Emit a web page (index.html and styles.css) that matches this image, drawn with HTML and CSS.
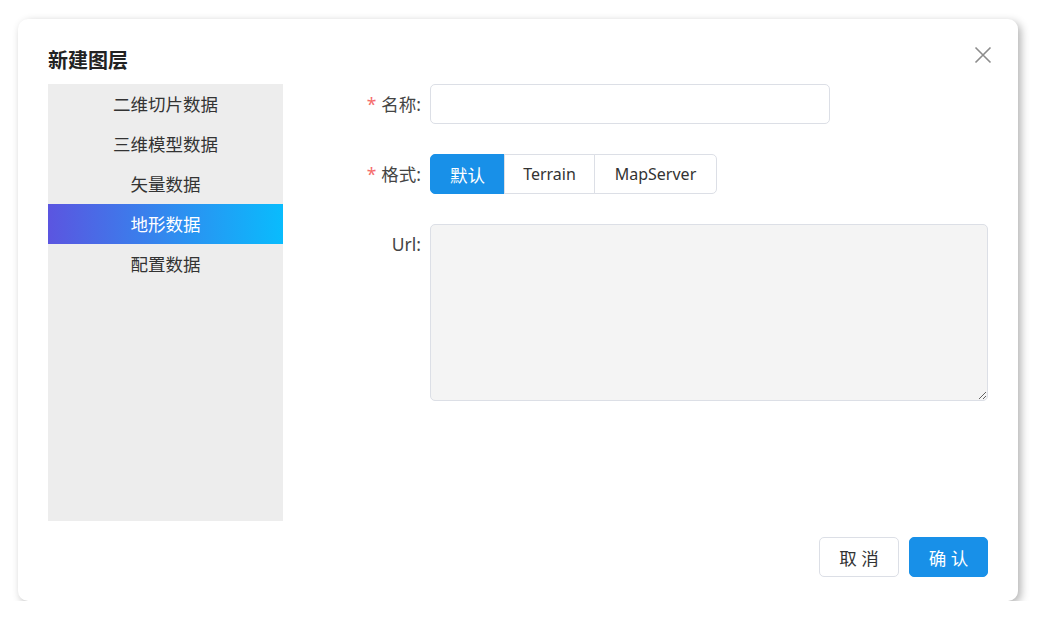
FILE: index.html
```html
<!DOCTYPE html>
<html lang="zh-CN">
  <head>
    <meta charset="utf-8">
    <title>新建图层</title>
    <link rel="stylesheet" href="styles.css">
  </head>
  <body>
    <div class="dialog">
      <header class="dialog-header">
        <h1>新建图层</h1>
        <button class="close" type="button" aria-label="关闭">
          <svg width="18" height="18" viewBox="0 0 18 18"><path d="M1.5 1.5 L16.5 16.5 M16.5 1.5 L1.5 16.5" stroke="#8c8c8c" stroke-width="1.6" fill="none"/></svg>
        </button>
      </header>
      <div class="dialog-body">
        <ul class="side-menu">
          <li>二维切片数据</li>
          <li>三维模型数据</li>
          <li>矢量数据</li>
          <li class="active">地形数据</li>
          <li>配置数据</li>
        </ul>
        <form class="form">
          <div class="form-row">
            <label class="required">名称:</label>
            <input class="text-input name-input" type="text">
          </div>
          <div class="form-row">
            <label class="required">格式:</label>
            <div class="segmented">
              <button type="button" class="seg active">默认</button>
              <button type="button" class="seg">Terrain</button>
              <button type="button" class="seg">MapServer</button>
            </div>
          </div>
          <div class="form-row">
            <label>Url:</label>
            <textarea class="url-input"></textarea>
          </div>
        </form>
      </div>
      <footer class="dialog-footer">
        <button type="button" class="btn">取 消</button>
        <button type="button" class="btn btn-primary">确 认</button>
      </footer>
    </div>
  </body>
</html>
```

FILE: styles.css
```css
* {
  box-sizing: border-box;
}

body {
  margin: 0;
  background: #fff;
  font-family: "Noto Sans", "Noto Sans CJK SC", sans-serif;
  color: #333;
}

.dialog {
  width: 1000px;
  height: 582px;
  margin: 19px 0 0 18px;
  background: #fff;
  border-radius: 10px;
  box-shadow: 3px 3px 8px rgba(0, 0, 0, .3);
  padding: 0 30px;
  display: flex;
  flex-direction: column;
}

.dialog-header {
  display: flex;
  justify-content: space-between;
  align-items: flex-start;
  padding-top: 29px;
  height: 65px;
}

.dialog-header h1 {
  margin: 0;
  font-size: 20px;
  line-height: 26px;
  font-weight: bold;
  color: #222;
}

.close {
  border: 0;
  background: none;
  padding: 0;
  margin: -5px -7px 0 0;
  cursor: pointer;
  width: 24px;
  height: 24px;
  display: flex;
  align-items: center;
  justify-content: center;
}

.dialog-body {
  display: flex;
}

.side-menu {
  list-style: none;
  margin: 0;
  padding: 0;
  width: 235px;
  height: 437px;
  background: #ededed;
  flex-shrink: 0;
}

.side-menu li {
  height: 40px;
  line-height: 40px;
  text-align: center;
  font-size: 17.5px;
  color: #333;
}

.side-menu li.active {
  color: #fff;
  background: linear-gradient(90deg, #5b55e0, #09bcfd);
}

.form {
  flex: 1;
  margin-left: 27px;
  display: flex;
  flex-direction: column;
  gap: 30px;
}

.form-row {
  display: flex;
  align-items: flex-start;
}

.form-row label {
  width: 120px;
  padding-right: 9px;
  text-align: right;
  font-size: 17.5px;
  line-height: 40px;
  color: #444;
  flex-shrink: 0;
}

.form-row label.required:before {
  content: "*";
  color: #f56c6c;
  margin-right: 5px;
}

.text-input {
  height: 40px;
  border: 1px solid #dcdfe6;
  border-radius: 5px;
  outline: none;
  padding: 0 12px;
  font-size: 15px;
}

.name-input {
  width: 400px;
}

.segmented {
  display: flex;
}

.seg {
  height: 40px;
  border: 1px solid #dcdfe6;
  background: #fff;
  font-family: inherit;
  font-size: 16px;
  color: #333;
  padding: 0 18px;
  margin-left: -1px;
}

.seg:first-child {
  margin-left: 0;
  border-radius: 5px 0 0 5px;
}

.seg:last-child {
  border-radius: 0 5px 5px 0;
}

.seg.active {
  background: #1890e8;
  border-color: #1890e8;
  color: #fff;
  font-size: 17.5px;
  padding: 0;
  width: 75px;
}

.seg:nth-child(2) {
  width: 91px;
}

.seg:nth-child(3) {
  width: 123px;
}

.url-input {
  flex: 1;
  height: 177px;
  background: #f4f4f4;
  border: 1px solid #dcdfe6;
  border-radius: 5px;
  outline: none;
  resize: vertical;
}

.dialog-footer {
  display: flex;
  justify-content: flex-end;
  gap: 10px;
  padding-top: 16px;
}

.btn {
  width: 80px;
  height: 40px;
  border: 1px solid #dcdfe6;
  border-radius: 5px;
  background: #fff;
  font-family: inherit;
  font-size: 17.5px;
  color: #333;
  cursor: pointer;
}

.btn-primary {
  width: 79px;
  background: #1890e8;
  border-color: #1890e8;
  color: #fff;
}
```
